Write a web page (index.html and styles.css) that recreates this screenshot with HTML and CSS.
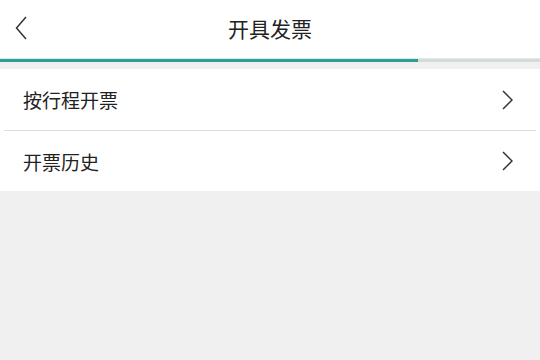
FILE: index.html
```html
<!DOCTYPE html>
<html lang="zh">
<head>
<meta charset="utf-8">
<link rel="stylesheet" href="styles.css">
</head>
<body>
<header class="nav">
  <span class="back">
    <svg width="12" height="24" viewBox="0 0 12 24"><path d="M11 1 L1.5 12 L11 23" fill="none" stroke="#333" stroke-width="1.5"/></svg>
  </span>
  <h1 class="title">开具发票</h1>
</header>
<div class="progress"><div class="progress-fill"></div></div>
<ul class="list">
  <li class="row"><span class="label">按行程开票</span><svg class="arrow" width="11" height="20" viewBox="0 0 11 20"><path d="M1 1 L10 10 L1 19" fill="none" stroke="#333" stroke-width="1.5"/></svg></li>
  <li class="divider"></li>
  <li class="row"><span class="label">开票历史</span><svg class="arrow" width="11" height="20" viewBox="0 0 11 20"><path d="M1 1 L10 10 L1 19" fill="none" stroke="#333" stroke-width="1.5"/></svg></li>
</ul>
</body>
</html>
```
FILE: styles.css
```css
html, body {
  margin: 0;
  padding: 0;
  background: #f0f0f0;
  font-family: "Noto Sans CJK SC", "Noto Sans", sans-serif;
  color: #222;
}
.nav {
  height: 58px;
  background: #fff;
  border-bottom: 1px solid #d6efec;
  display: flex;
  align-items: center;
  justify-content: center;
  position: relative;
}
.back {
  position: absolute;
  left: 15px;
  top: 16px;
  display: block;
  line-height: 0;
}
.title {
  margin: 0;
  font-size: 21px;
  font-weight: 400;
  color: #222;
  line-height: 1;
  padding-bottom: 2px;
}
.progress {
  height: 3px;
  background: #d9d9d9;
}
.progress-fill {
  width: 418px;
  height: 100%;
  background: #2f9d95;
}
.list {
  list-style: none;
  margin: 7px 0 0;
  padding: 0;
  background: #fff;
}
.row {
  height: 60px;
  display: flex;
  align-items: center;
  justify-content: space-between;
  padding: 0 27px 0 23px;
}
.row:first-child {
  height: 61px;
}
.label {
  font-size: 19px;
  line-height: 1;
  color: #222;
}
.arrow {
  display: block;
}
.divider {
  height: 1px;
  margin: 0 4px;
  background: #dcdcdc;
}
```
